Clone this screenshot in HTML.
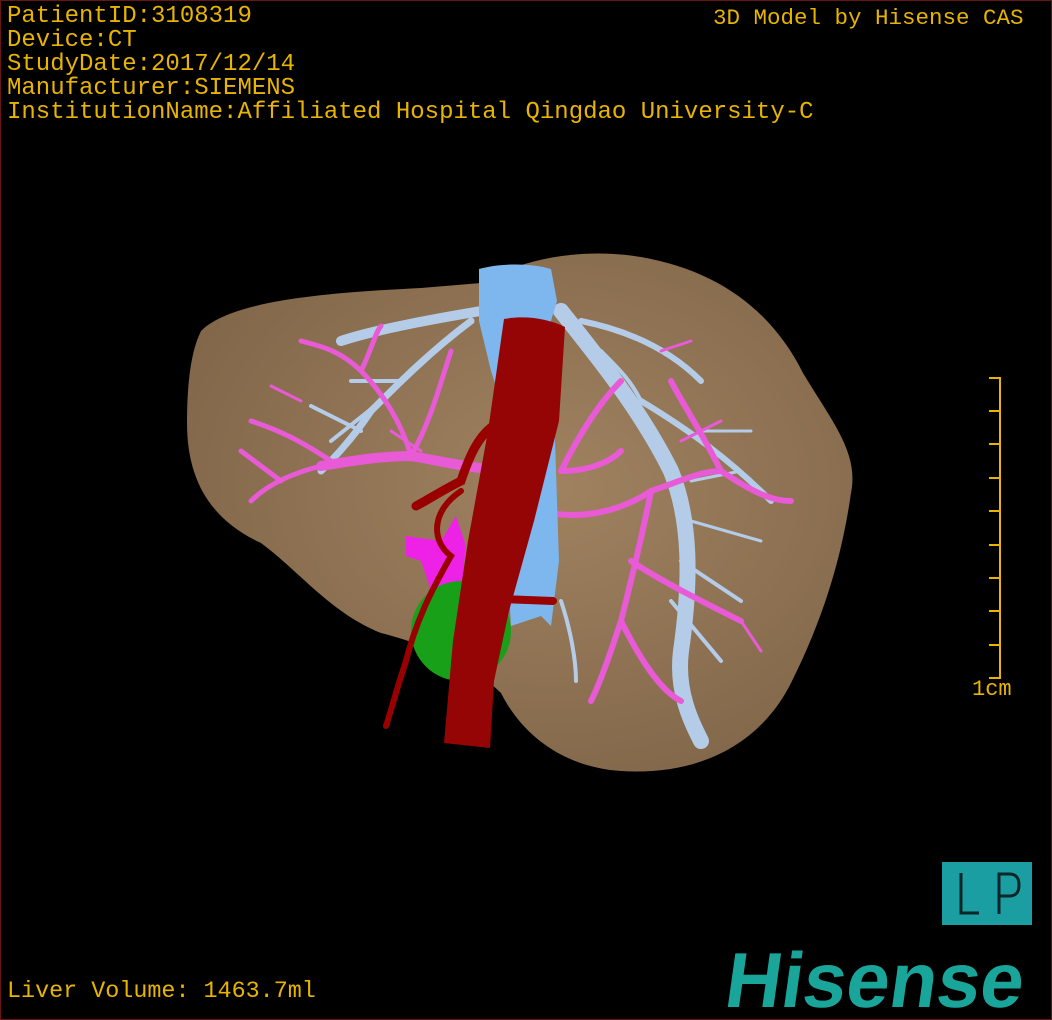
<!DOCTYPE html>
<html><head><meta charset="utf-8"><style>
html,body{margin:0;padding:0;background:#000;}
#f{position:relative;width:1052px;height:1020px;background:#000;overflow:hidden;box-sizing:border-box;border:1px solid #6a1414;}
.t{position:absolute;font-family:"Liberation Mono",monospace;color:#e8b400;white-space:pre;line-height:24px;}
</style></head><body><div id="f">
<svg width="1052" height="1020" style="position:absolute;left:0;top:0">
<defs>
<radialGradient id="lg" cx="0.55" cy="0.45" r="0.6"><stop offset="0" stop-color="#a08260"/><stop offset="1" stop-color="#82674a"/></radialGradient>
</defs>
<path d="M200 330 C230 300 320 292 420 287 L480 282 C520 258 580 246 640 256 C720 270 772 312 802 372 C832 422 858 452 850 492 C840 562 820 622 790 682 C760 742 700 775 620 770 C560 766 520 732 500 692 C470 662 420 642 380 632 C330 612 300 572 260 542 C212 520 186 482 186 422 C186 382 190 350 200 330 Z" fill="url(#lg)"/>
<g stroke="#b4cce8" fill="none" stroke-linecap="round">
<path d="M480 310 C420 320 370 330 340 340" stroke-width="10"/>
<path d="M470 320 C430 350 400 380 370 410 C350 440 330 460 320 470" stroke-width="7"/>
<path d="M380 400 L330 440 M360 430 L310 405 M400 380 L350 380" stroke-width="4"/>
<path d="M560 310 C600 360 640 410 670 470 C690 520 690 580 680 650 C675 690 690 720 700 740" stroke-width="16"/>
<path d="M580 320 C630 330 670 350 700 380 M640 400 C690 430 730 460 770 500" stroke-width="6"/>
<path d="M600 350 C620 370 630 380 640 400 M680 560 L740 600 M670 600 L720 660 M560 600 C570 630 575 660 575 680" stroke-width="4"/>
<path d="M690 480 L740 470 M700 430 L750 430 M690 520 L760 540" stroke-width="3"/>
</g>
<g stroke="#e85ad6" fill="none" stroke-linecap="round">
<path d="M520 470 C480 470 440 460 410 455 C380 455 350 460 320 465" stroke-width="10"/>
<path d="M410 455 C400 420 380 390 360 370 M410 455 C430 420 440 380 450 350 M320 465 C300 470 270 480 250 500 M330 460 C300 440 280 430 250 420 M360 370 C340 350 320 345 300 340 M360 370 C370 350 375 330 380 325 M280 480 L240 450" stroke-width="5"/>
<path d="M540 510 C580 520 620 510 650 490 C680 480 700 470 720 470 M650 490 C640 540 630 580 620 620 C610 650 600 680 590 700 M630 560 C660 580 700 600 740 620 M720 470 C750 490 770 500 790 500 M720 470 C700 430 680 400 670 380 M620 620 C640 660 660 690 680 700 M560 470 C580 430 600 400 620 380 M560 470 C590 470 610 460 620 450" stroke-width="6"/>
<path d="M420 450 L390 430 M300 400 L270 385 M680 440 L720 420 M740 620 L760 650 M660 350 L690 340" stroke-width="3"/>
</g>
<path d="M478 268 C500 262 530 262 550 268 L556 300 L550 320 L558 560 L550 625 L540 615 L510 625 L506 560 L500 400 L490 370 L478 320 Z" fill="#7eb6ee"/>
<path d="M405 535 L440 540 L455 515 L465 545 L460 590 L430 590 L420 560 L405 555 Z" fill="#ee22e6"/>
<ellipse cx="460" cy="630" rx="50" ry="50" fill="#18a018"/>
<g stroke="#990000" fill="none" stroke-linecap="round">
<path d="M500 420 C480 430 470 450 460 480 C440 490 425 500 415 505" stroke-width="9"/>
<path d="M460 490 C430 510 430 540 450 555 C430 590 415 620 405 660 C395 690 390 710 385 725" stroke-width="6"/>
<path d="M500 598 L552 600" stroke-width="8"/>
</g>
<path d="M503 318 C525 314 548 318 564 326 L558 420 L533 520 L508 610 L493 680 L489 747 L443 742 L452 640 L467 540 L487 430 Z" fill="#950505"/>
<g stroke="#e8b400" stroke-width="2">
<line x1="999" y1="376" x2="999" y2="678"/>
<line x1="988" y1="377" x2="999" y2="377"/><line x1="988" y1="410" x2="999" y2="410"/><line x1="988" y1="443" x2="999" y2="443"/><line x1="988" y1="477" x2="999" y2="477"/><line x1="988" y1="510" x2="999" y2="510"/><line x1="988" y1="544" x2="999" y2="544"/><line x1="988" y1="577" x2="999" y2="577"/><line x1="988" y1="610" x2="999" y2="610"/><line x1="988" y1="644" x2="999" y2="644"/><line x1="988" y1="677" x2="999" y2="677"/>
</g>
<rect x="941" y="861" width="90" height="63" fill="#1a9ea2"/>
<g stroke="#0a2628" stroke-width="3" fill="none">
<path d="M960 872 L960 912 L978 912"/>
<path d="M998 913 L998 873 L1008 873 C1016 873 1018 878 1018 884 C1018 890 1016 895 1008 895 L998 895"/>
</g>
<text x="722" y="1006" transform="skewX(-8) translate(141 0)" font-family="Liberation Sans,sans-serif" font-weight="bold" font-size="78" fill="#1aa59b" textLength="298" lengthAdjust="spacingAndGlyphs">Hisense</text>
</svg>
<div class="t" style="left:6px;top:4px;font-size:24px">PatientID:3108319
Device:CT
StudyDate:2017/12/14
Manufacturer:SIEMENS
InstitutionName:Affiliated Hospital Qingdao University-C</div>
<div class="t" style="left:712px;top:5px;font-size:22.5px">3D Model by Hisense CAS</div>
<div class="t" style="left:971px;top:677px;font-size:22px">1cm</div>
<div class="t" style="left:6px;top:979px;font-size:23.4px">Liver Volume: 1463.7ml</div>
</div></body></html>
